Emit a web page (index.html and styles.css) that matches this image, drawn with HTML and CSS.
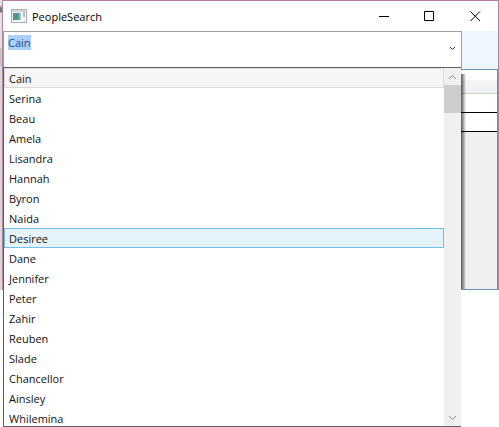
FILE: index.html
```html
<!DOCTYPE html>
<html lang="en">
<head>
<meta charset="utf-8">
<title>PeopleSearch</title>
<link rel="stylesheet" href="styles.css">
</head>
<body>
<div class="desktop">
  <div class="backdrop"></div>
  <main class="window">
    <header class="titlebar">
      <svg class="app-icon" viewBox="0 0 16 14" aria-hidden="true">
        <defs><linearGradient id="pane" x1="0" y1="0" x2="1" y2="1"><stop offset="0" stop-color="#4f93a8"/><stop offset="1" stop-color="#4f9a72"/></linearGradient></defs>
        <rect x=".5" y=".5" width="15" height="13" fill="#f1f1f2" stroke="#aaaeb3"/>
        <rect x="1" y="1" width="14" height="2" fill="#d5d8db"/>
        <rect x="2" y="4" width="6" height="7" fill="url(#pane)"/>
        <rect x="8" y="4" width="2" height="7" fill="#9dbdb6"/>
        <rect x="10" y="4" width="2" height="8" fill="#fff"/>
        <rect x="12" y="3" width="2" height="5" fill="#b4bbc0"/>
      </svg>
      <h1 class="title">PeopleSearch</h1>
      <div class="window-buttons">
        <button type="button" class="window-button" aria-label="Minimize"><svg width="11" height="11" viewBox="0 0 11 11"><path d="M1 5.5H11"/></svg></button>
        <button type="button" class="window-button" aria-label="Maximize"><svg width="11" height="11" viewBox="0 0 11 11"><path d="M.5 .5H9.5V9.5H.5Z"/></svg></button>
        <button type="button" class="window-button" aria-label="Close"><svg width="11" height="11" viewBox="0 0 11 11"><path d="M.5 .5L10 10M10 .5L.5 10"/></svg></button>
      </div>
    </header>
    <div class="client">
      <div class="combo">
        <div class="field">
          <input class="field-input" id="person" type="text" value="Cain" role="combobox" aria-label="Person" aria-expanded="true" aria-controls="people" autocomplete="off" spellcheck="false">
          <button type="button" class="field-arrow" aria-label="Show people"><svg width="7" height="5" viewBox="0 0 7 5"><path d="M1 1L3.5 3.5L6 1"/></svg></button>
        </div>
        <div class="popup">
          <ul class="options" id="people" role="listbox" aria-label="People">
            <li class="option selected" role="option" aria-selected="true">Cain</li>
            <li class="option" role="option">Serina</li>
            <li class="option" role="option">Beau</li>
            <li class="option" role="option">Amela</li>
            <li class="option" role="option">Lisandra</li>
            <li class="option" role="option">Hannah</li>
            <li class="option" role="option">Byron</li>
            <li class="option" role="option">Naida</li>
            <li class="option hovered" role="option">Desiree</li>
            <li class="option" role="option">Dane</li>
            <li class="option" role="option">Jennifer</li>
            <li class="option" role="option">Peter</li>
            <li class="option" role="option">Zahir</li>
            <li class="option" role="option">Reuben</li>
            <li class="option" role="option">Slade</li>
            <li class="option" role="option">Chancellor</li>
            <li class="option" role="option">Ainsley</li>
            <li class="option" role="option">Whilemina</li>
          </ul>
          <div class="scrollbar">
            <button type="button" class="scroll-button" aria-label="Scroll up"><svg width="9" height="6" viewBox="0 0 9 6"><path d="M1 5L4.5 1.5L8 5"/></svg></button>
            <div class="thumb"></div>
            <button type="button" class="scroll-button last" aria-label="Scroll down"><svg width="9" height="6" viewBox="0 0 9 6"><path d="M1 1L4.5 4.5L8 1"/></svg></button>
          </div>
        </div>
      </div>
      <div class="grid">
        <div class="grid-head"></div>
        <div class="grid-row"></div>
        <div class="grid-row"></div>
        <div class="grid-empty"></div>
      </div>
    </div>
  </main>
</div>
<script src="script.js"></script>
</body>
</html>
```
FILE: styles.css
```css
* {
  box-sizing: border-box;
}

html,
body {
  min-height: 100vh;
}

body {
  margin: 0;
  background: #fff;
  color: #111;
  font: 11px/15px "Open Sans", "Noto Sans", sans-serif;
  overflow: hidden;
}

button {
  display: flex;
  align-items: center;
  justify-content: center;
  padding: 0;
  border: 0;
  background: transparent;
}

svg {
  display: block;
  fill: none;
  stroke-width: 1;
}

.desktop {
  display: flex;
}

.backdrop {
  width: 2px;
  background: linear-gradient(#e4e1e3 5px, #77757a 8px, #77757a 12px, #e4e1e3 13px, #e4e1e3 48px, #c9c6c8 48px, #c9c6c8 67px, #dcd6d9 67px);
}

.window {
  flex: 1;
  border: 1px solid #b5809a;
  border-bottom: 0;
}

.titlebar {
  display: flex;
  align-items: center;
  height: 30px;
  padding-left: 8px;
  background: #fff;
}

.app-icon {
  width: 16px;
  height: 14px;
}

.title {
  flex: 1;
  margin: 0 0 0 5px;
  font-size: 11px;
  font-weight: 400;
  color: #000;
}

.window-buttons {
  display: flex;
}

.window-button {
  width: 46px;
  height: 30px;
  stroke: #000;
}

.client {
  background: #eef7ff;
}

.combo {
  position: relative;
  margin-right: 36px;
}

.field {
  display: flex;
  height: 38px;
  border: 1px solid #a0a0a0;
  background: #fff;
}

.field-input {
  flex: 1;
  min-width: 0;
  height: 15px;
  margin-top: 3px;
  padding: 0 4px;
  border: 0;
  outline: 0;
  background: transparent;
  color: #111;
  font: inherit;
}

.field-input::selection {
  background: #a9d1fb;
  color: #1f4e85;
}

.field-arrow {
  width: 17px;
  height: 32px;
  stroke: #333;
}

.popup {
  position: absolute;
  top: 36px;
  left: 0;
  right: 1px;
  z-index: 1;
  display: flex;
  border: 1px solid #606060;
  border-right: 0;
  background: #fff;
}

.options {
  flex: 1;
  margin: 0;
  padding: 0;
  list-style: none;
}

.option:last-child {
  height: 18px;
}

.option {
  height: 20px;
  padding: 2px 4px 0;
  border: 1px solid transparent;
}

.option.selected {
  border-color: #dadada;
  background: #f5f5f5;
}

.option.hovered {
  border-color: #70c0e7;
  background: #e5f3fb;
}

.scrollbar {
  display: flex;
  flex-direction: column;
  width: 17px;
  background: #f0f0f0;
}

.scroll-button {
  height: 17px;
  stroke: #888;
}

.scroll-button.last {
  margin-top: auto;
}

.thumb {
  height: 28px;
  background: #cdcdcd;
}

.grid {
  position: relative;
  border: 1px solid #6f8fae;
  border-left: 0;
  background: #fff;
}

/* Shadow the popup casts on the window behind it */
.grid::after {
  content: "";
  position: absolute;
  top: 4px;
  right: 31px;
  bottom: 0;
  width: 5px;
  background: linear-gradient(90deg, rgba(0, 0, 0, .65), rgba(0, 0, 0, .4) 40%, transparent);
}

.grid-head {
  height: 24px;
  border-bottom: 1px solid #d0d0d0;
  background: linear-gradient(#fff 40%, #f3f4f5 45%, #f0f1f2);
}

.grid-row {
  height: 19px;
  border-bottom: 1px solid #000;
}

.grid-empty {
  height: 157px;
  background: #f0f0f0;
}
```
FILE: script.js
```js
const person = document.getElementById("person");
person.focus();
person.select();
```
